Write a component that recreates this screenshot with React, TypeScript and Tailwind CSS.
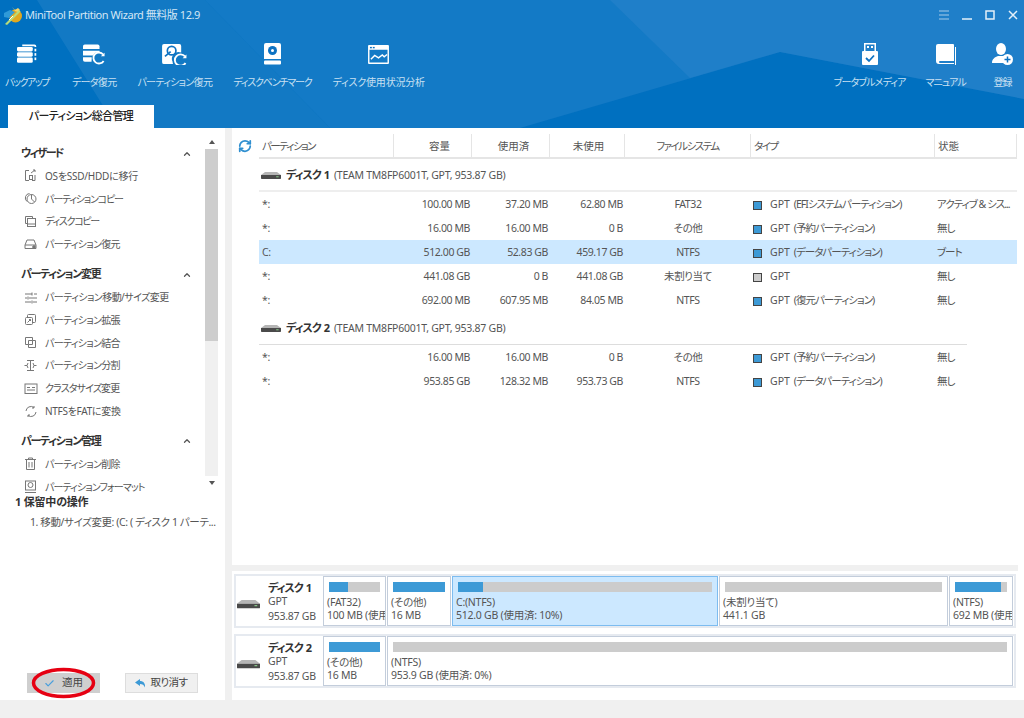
import React from "react";
import { RefreshCw, Check, ChevronUp } from "lucide-react";

const cols = "grid grid-cols-[135px_78px_78px_75px_126px_184px_82px]";

const tools = [
  { label: "バックアップ", icon: "backup", track: "tracking-[-1.5px]", cls: "w-[48px]" },
  { label: "データ復元", icon: "data", track: "tracking-[-0.7px]", cls: "" },
  { label: "パーティション復元", icon: "part", track: "tracking-[-0.7px]", cls: "" },
  { label: "ディスクベンチマーク", icon: "bench", track: "tracking-[-1.2px]", cls: "" },
  { label: "ディスク使用状況分析", icon: "usage", track: "tracking-[-0.2px]", cls: "" },
];

const ToolIcon = ({ name }: { name: string }) => {
  if (name === "backup")
    return (
      <svg width="21" height="20" viewBox="0 0 24 22" fill="white">
        <path d="M6 0h14a2 2 0 0 1 2 2v1h-2V2H6z" />
        <rect x="0" y="3" width="18" height="5" rx="1.5" />
        <rect x="0" y="9" width="18" height="5" rx="1.5" />
        <rect x="0" y="15" width="18" height="6" rx="1.5" />
        <rect x="20" y="5" width="2" height="3" />
        <rect x="20" y="10" width="2" height="3" />
        <rect x="20" y="15" width="2" height="3" />
      </svg>
    );
  if (name === "data")
    return (
      <svg width="22" height="21" viewBox="0 0 24 22" fill="white">
        <path d="M2 0h14a2 2 0 0 1 2 2v3H0V2a2 2 0 0 1 2-2z" />
        <path d="M0 7h18v2a6 6 0 0 0-7 3H0z" />
        <path d="M0 14h9.500v1l-.2 4H2a2 2 0 0 1-2-2z" />
        <path d="M22 11a6 6 0 1 0 .5 7" fill="none" stroke="white" strokeWidth="2" />
        <path d="M19.500 13h4v-4z" />
      </svg>
    );
  if (name === "part")
    return (
      <svg width="25" height="21" viewBox="0 0 26 22" fill="white">
        <path d="M2 0h16a2 2 0 0 1 2 2v7a7 7 0 0 0-9 9.500 7 7 0 0 0 .5 2.500H2a2 2 0 0 1-2-2V2a2 2 0 0 1 2-2z" />
        <circle cx="10" cy="7" r="4.500" fill="none" stroke="#0d72c2" strokeWidth="1.800" />
        <path d="M3 13l6-5" stroke="#0d72c2" strokeWidth="1.800" />
        <path d="M24 13a6 6 0 1 0 .5 7" fill="none" stroke="white" strokeWidth="2" />
        <path d="M21.500 15h4v-4z" />
      </svg>
    );
  if (name === "bench")
    return (
      <svg width="17" height="22" viewBox="0 0 17 22" fill="white">
        <path d="M2 0h13a2 2 0 0 1 2 2v14H0V2a2 2 0 0 1 2-2z" />
        <circle cx="8.500" cy="7.500" r="4.500" fill="#0d72c2" />
        <circle cx="8.500" cy="7.500" r="1.500" />
        <rect x="0" y="17.500" width="17" height="4" rx="1" />
      </svg>
    );
  return (
    <svg width="21" height="19" viewBox="0 0 22 20" fill="white">
      <path fillRule="evenodd" d="M1 0h20a1 1 0 0 1 1 1v18a1 1 0 0 1-1 1H1a1 1 0 0 1-1-1V1a1 1 0 0 1 1-1zM1.500 5v13.500h19V5z" />
      <rect x="2" y="2" width="2" height="1.500" fill="#0d72c2" />
      <rect x="5" y="2" width="2" height="1.500" fill="#0d72c2" />
      <path d="M3 15l4-4 4 2.500 4-3 2 2 3-2.500" fill="none" stroke="white" strokeWidth="1.500" />
    </svg>
  );
};

const RightTool = ({ label, children, cls }: { label: string; children: React.ReactNode; cls: string }) => (
  <div className={`flex flex-col items-center ${cls}`}>
    <div className="h-[24px] flex items-center justify-center">{children}</div>
    <div className="mt-[9px] text-[10px] leading-[14px] text-[#c9e0f2] whitespace-nowrap tracking-[-0.9px]">{label}</div>
  </div>
);

const sideGroups = [
  {
    title: "ウィザード",
    mt: "mt-0",
    track: "tracking-[-1.8px]",
    items: [
      ["os", "OSをSSD/HDDに移行", "tracking-[-0.25px]"],
      ["copyPart", "パーティションコピー", "tracking-[-1.2px]"],
      ["copyDisk", "ディスクコピー", "tracking-[-1.3px]"],
      ["restore", "パーティション復元", "tracking-[-0.7px]"],
    ],
  },
  {
    title: "パーティション変更",
    mt: "mt-[7px]",
    track: "tracking-[-1.3px]",
    items: [
      ["sliders", "パーティション移動/サイズ変更", "tracking-[-0.55px]"],
      ["extend", "パーティション拡張", "tracking-[-0.7px]"],
      ["merge", "パーティション結合", "tracking-[-0.7px]"],
      ["split", "パーティション分割", "tracking-[-0.7px]"],
      ["cluster", "クラスタサイズ変更", "tracking-[-0.9px]"],
      ["convert", "NTFSをFATに変換", "tracking-[-0.3px]"],
    ],
  },
  {
    title: "パーティション管理",
    mt: "mt-[7px]",
    track: "tracking-[-1.3px]",
    items: [
      ["trash", "パーティション削除", "tracking-[-0.7px]"],
      ["format", "パーティションフォーマット", "tracking-[-0.9px]"],
    ],
  },
];

const SideIcon = ({ name }: { name: string }) => {
  const shapes: Record<string, React.ReactNode> = {
    os: (
      <>
        <path d="M5 1.500H1.500v10H5M8 11.500h3V6" />
        <rect x="5.500" y="6.500" width="3" height="4" />
        <path d="M7 4l4-3M9 1h2v2" />
      </>
    ),
    copyPart: (
      <>
        <path d="M3 9.500A4.500 4.500 0 0 1 5.500 1.500" />
        <circle cx="7.500" cy="7" r="4.500" />
        <path d="M7.500 2.500V7l3 3" />
      </>
    ),
    copyDisk: (
      <>
        <path d="M3.500 8.500h-2v-7h7v2" />
        <rect x="3.500" y="3.500" width="8" height="8" />
        <path d="M3.500 9h8" />
      </>
    ),
    restore: (
      <>
        <path d="M1 7l2-5h7l2 5v3.500H1z" />
        <path d="M1 7h11" />
        <circle cx="10" cy="9" r="1.300" fill="#777" />
      </>
    ),
    sliders: <path d="M1 3h7M10 3h3M1 7h2M5 7h8M1 11h6M9 11h4M8 1.500v3M4 5.500v3M8 9.500v3" />,
    extend: (
      <>
        <rect x="3.500" y="1.500" width="8" height="8" rx="1" />
        <rect x="1.500" y="4.500" width="7" height="7" rx="1" fill="white" />
        <path d="M3.500 9.500l3-3M5 6.500h1.500V8" />
      </>
    ),
    merge: <path d="M1.500 1.500h7v3h3v7h-7v-3h-3zM4.500 4.500h4v4h-4z" />,
    split: <path d="M6.500 1v11M3 1.500h7M3 11.500h7M3 6.500H.5M10 6.500h2.500M4 4l-1 2.500L4 9M9 4l1 2.500L9 9" />,
    cluster: (
      <>
        <rect x="1" y="2" width="12" height="9.500" />
        <path d="M3 5.500h3M8 5.500h3M3 8h8" />
      </>
    ),
    convert: <path d="M2 6a5 5 0 0 1 8-3.500M12 7a5 5 0 0 1-8 3.500M10 1v2h-2M4 12v-2h2" />,
    trash: (
      <>
        <path d="M1 2.500h11M4.500 2.500V1h4v1.500M2.500 3v9.500h8V3" />
        <path d="M5 5v5.500M8 5v5.500" />
      </>
    ),
    format: (
      <>
        <rect x="1.500" y="1" width="10" height="9" />
        <circle cx="6.500" cy="5" r="2.500" />
        <path d="M1 12.500h11" />
      </>
    ),
  };
  return (
    <svg width="14" height="14" viewBox="0 0 14 14" fill="none" stroke="#777" strokeWidth="1">
      {shapes[name]}
    </svg>
  );
};

type Row = { name: string; cap: string; used: string; free: string; fs: string; type: string; state: string; selected?: boolean; gray?: boolean };

const disk1: Row[] = [
  { name: "*:", cap: "100.00 MB", used: "37.20 MB", free: "62.80 MB", fs: "FAT32", type: "(EFIシステムパーティション)", state: "アクティブ & シス..." },
  { name: "*:", cap: "16.00 MB", used: "16.00 MB", free: "0 B", fs: "その他", type: "(予約パーティション)", state: "無し" },
  { name: "C:", cap: "512.00 GB", used: "52.83 GB", free: "459.17 GB", fs: "NTFS", type: "(データパーティション)", state: "ブート", selected: true },
  { name: "*:", cap: "441.08 GB", used: "0 B", free: "441.08 GB", fs: "未割り当て", type: "", state: "無し", gray: true },
  { name: "*:", cap: "692.00 MB", used: "607.95 MB", free: "84.05 MB", fs: "NTFS", type: "(復元パーティション)", state: "無し" },
];

const disk2: Row[] = [
  { name: "*:", cap: "16.00 MB", used: "16.00 MB", free: "0 B", fs: "その他", type: "(予約パーティション)", state: "無し" },
  { name: "*:", cap: "953.85 GB", used: "128.32 MB", free: "953.73 GB", fs: "NTFS", type: "(データパーティション)", state: "無し" },
];

const DiskIcon = ({ w = 25 }: { w?: number }) => (
  <svg width={w} height={w * 0.45} viewBox="0 0 25 11">
    <path d="M0 5l5-4h15l5 4z" fill="#b5b5b5" />
    <path d="M0 5h25v4a1 1 0 0 1-1 1H1a1 1 0 0 1-1-1z" fill="#4a4a4a" />
    <rect x="19" y="6.500" width="3" height="1.200" fill="#8fd08f" />
  </svg>
);

const TableRow = ({ r }: { r: Row }) => (
  <div className={`${cols} h-6 items-center text-[10.500px] text-[#555] tracking-[-0.4px] ${r.selected ? "bg-[#cce8ff]" : ""}`}>
    <div className="pl-[3px] pt-[2px]">{r.name}</div>
    <div className="text-right pr-[2px] pt-[2px]">{r.cap}</div>
    <div className="text-right pr-[2px] pt-[2px]">{r.used}</div>
    <div className="text-right pr-[2px] pt-[2px]">{r.free}</div>
    <div className="text-center pt-[2px]">{r.fs}</div>
    <div className="flex items-center pl-[2px] pt-[2px] whitespace-nowrap">
      <span className={`w-[9px] h-[9px] border border-[#444] mr-[8px] ${r.gray ? "bg-[#ccc]" : "bg-[#3d9ad6]"}`} />
      <span className="mr-[4px] tracking-normal">GPT</span>
      <span className="tracking-[-1px]">{r.type}</span>
    </div>
    <div className="pl-[2px] pt-[2px] whitespace-nowrap overflow-hidden tracking-[-1px]">{r.state}</div>
  </div>
);

const DiskHead = ({ n, thick, short }: { n: number; thick?: boolean; short?: boolean }) => (
  <div className={`flex items-center h-[33px] ${short ? "w-[708px] border-b border-[#dddddd] pt-[1px]" : "border-b-2 border-[#eeeeee] pt-[2px]"}`}>
    <span className="ml-[2px] mr-[5px] flex">
      <DiskIcon w={20} />
    </span>
    <span className="text-[11px] font-bold text-[#333] tracking-[-1px]">ディスク</span>
    <span className="ml-[3px] text-[11px] font-bold text-[#333]">{n}</span>
    <span className="ml-[4px] text-[10.500px] text-[#555] tracking-[-0.25px]">(TEAM TM8FP6001T, GPT, 953.87 GB)</span>
  </div>
);

type Seg = { w: string; line1: string; line2: string; fill: string; selected?: boolean };

const map1: Seg[] = [
  { w: "w-[63px]", line1: "(FAT32)", line2: "100 MB (使用", fill: "w-[37%]" },
  { w: "w-[64px]", line1: "(その他)", line2: "16 MB", fill: "w-full" },
  { w: "w-[266px]", line1: "C:(NTFS)", line2: "512.0 GB (使用済: 10%)", fill: "w-[10%]", selected: true },
  { w: "w-[229px]", line1: "(未割り当て)", line2: "441.1 GB", fill: "w-0" },
  { w: "w-[64px]", line1: "(NTFS)", line2: "692 MB (使用", fill: "w-[88%]" },
];

const map2: Seg[] = [
  { w: "w-[63px]", line1: "(その他)", line2: "16 MB", fill: "w-full" },
  { w: "w-[626px]", line1: "(NTFS)", line2: "953.9 GB (使用済: 0%)", fill: "w-0" },
];

const MapDisk = ({ n, segs }: { n: number; segs: Seg[] }) => (
  <div className="h-[54px] border-2 border-[#e6eaf0] flex items-center">
    <div className="w-[87px] shrink-0 flex items-end h-full">
      <div className="w-[30px] pl-[1px] pb-[17px]">
        <DiskIcon w={23} />
      </div>
      <div className="pl-[2px] pb-[3px] text-[10.500px] leading-[14.500px] text-[#555] tracking-[-0.25px]">
        <div className="text-[11px] leading-[13px] font-bold text-[#333] flex">
          <span className="tracking-[-1px]">ディスク</span>
          <span className="ml-[3px]">{n}</span>
        </div>
        <div>GPT</div>
        <div className="whitespace-nowrap">953.87 GB</div>
      </div>
    </div>
    <div className="flex h-[50px] gap-[1px]">
      {segs.map((s) => (
        <div
          key={s.line1 + s.line2}
          className={`${s.w} h-full border px-[5px] pt-[5px] overflow-hidden ${s.selected ? "bg-[#cce8ff] border-[#7dbcf0]" : "border-[#c3cddb]"}`}
        >
          <div className="h-[10px] bg-[#cccccc]">
            <div className={`h-full bg-[#3d9ad6] ${s.fill}`} />
          </div>
          <div className="mt-[4px] -ml-[2px] text-[10.500px] leading-[13px] text-[#555] whitespace-nowrap tracking-[-0.25px]">
            <div>{s.line1}</div>
            <div>{s.line2}</div>
          </div>
        </div>
      ))}
    </div>
  </div>
);

export default function App() {
  return (
    <div className="w-[1024px] h-[718px] overflow-hidden flex flex-col bg-white font-['Noto_Sans','Noto_Sans_CJK_JP',sans-serif] [font-feature-settings:'palt']">
      {/* header */}
      <div className="relative h-[128px] shrink-0 bg-[#0070c0] overflow-hidden">
        <svg className="absolute inset-0" width="1024" height="128" viewBox="0 0 1024 128">
          <polygon points="37,0 205,0 330,128 117,128" fill="#3f92d0" opacity="0.28" />
          <polygon points="205,0 1024,0 1024,99 780,52 520,128 330,128" fill="#2584cc" opacity="0.5" />
          <polygon points="610,0 1024,0 1024,99 780,52 690,78" fill="#2f86cc" opacity="0.45" />
        </svg>
        <div className="relative h-full flex flex-col">
          <div className="h-[30px] flex items-center pl-[4px] pr-[6px]">
            <svg width="19" height="19" viewBox="0 0 19 19">
              <circle cx="11.500" cy="10" r="6.500" fill="#e0a820" />
              <path d="M0 7l6-3 5 2-6 6-5-1z" fill="#2f9ad8" />
              <path d="M8 1l3 3 3-2 2 2-2 2-3-1z" fill="#f5d76a" />
              <path d="M1 18L15 4l1.500 1.500L3 19z" fill="#b8dc7a" />
              <path d="M5 14l4-4" stroke="#ffffff" strokeWidth="1" />
            </svg>
            <span className="ml-[2px] text-[11px] text-[#d3e6f5] whitespace-nowrap tracking-[-0.45px]">MiniTool Partition Wizard 無料版 12.9</span>
            <div className="ml-auto flex items-center gap-[13px]">
              <svg width="10" height="10" viewBox="0 0 10 10" stroke="#a8cce8" strokeWidth="1">
                <path d="M0 1h10M0 5h10M0 9h10" />
              </svg>
              <svg width="10" height="10" viewBox="0 0 10 10" stroke="#e4f0f9" strokeWidth="1.500">
                <path d="M0 9h10" />
              </svg>
              <svg width="10" height="10" viewBox="0 0 10 10" fill="none" stroke="#e4f0f9" strokeWidth="1.500">
                <rect x="1" y="1" width="8" height="8" />
              </svg>
              <svg width="10" height="10" viewBox="0 0 10 10" stroke="#e4f0f9" strokeWidth="1.500">
                <path d="M1 1l8 8M9 1l-8 8" />
              </svg>
            </div>
          </div>
          <div className="flex pl-[3px] pr-[11px] pt-[12px]">
            <div className="flex gap-[21px]">
              {tools.map((t) => (
                <div key={t.label} className={`flex flex-col items-center ${t.cls}`}>
                  <div className="h-[24px] flex items-center justify-center">
                    <ToolIcon name={t.icon} />
                  </div>
                  <div className={`mt-[9px] text-[10px] leading-[14px] text-[#c9e0f2] whitespace-nowrap ${t.track}`}>{t.label}</div>
                </div>
              ))}
            </div>
            <div className="ml-auto flex">
              <RightTool label="ブータブルメディア" cls="">
                <svg width="16" height="22" viewBox="0 0 16 22" fill="white">
                  <path fillRule="evenodd" d="M2 0h12v8h-1.500V1.500h-9V8H2z" />
                  <rect x="5" y="3" width="2" height="2" />
                  <rect x="9" y="3" width="2" height="2" />
                  <rect x="0" y="8" width="16" height="14" rx="1" />
                  <path d="M4 15l3 3 5-5.500" fill="none" stroke="#0d72c2" strokeWidth="1.800" />
                </svg>
              </RightTool>
              <RightTool label="マニュアル" cls="ml-[20px]">
                <svg width="20" height="21" viewBox="0 0 20 21" fill="white">
                  <path d="M2 0h15a1 1 0 0 1 1 1v16H3.500a1.500 1.500 0 0 0 0 2H18v1H3a3 3 0 0 1-3-3V2a2 2 0 0 1 2-2z" />
                  <rect x="19" y="3" width="1" height="18" />
                </svg>
              </RightTool>
              <RightTool label="登録" cls="ml-[26px]">
                <svg width="21" height="22" viewBox="0 0 21 22" fill="white">
                  <ellipse cx="9" cy="6" rx="5" ry="6" />
                  <path d="M0 20c0-4 3-6 6-7h6l1 1a6 6 0 0 0-1 6z" />
                  <circle cx="15.500" cy="16.500" r="5.500" />
                  <path d="M15.500 13.500v6M12.500 16.500h6" stroke="#0d72c2" strokeWidth="1.500" />
                </svg>
              </RightTool>
            </div>
          </div>
          <div className="mt-auto pl-[8px] flex">
            <div className="w-[146px] h-[23px] bg-white flex items-center justify-center text-[11px] font-medium text-[#222] tracking-[-0.6px]">
              パーティション総合管理
            </div>
          </div>
        </div>
      </div>

      {/* body */}
      <div className="flex-1 flex min-h-0">
        {/* sidebar */}
        <div className="w-[225px] shrink-0 flex flex-col">
          <div className="h-[365px] shrink-0 flex overflow-hidden">
            <div className="w-[205px] shrink-0 pl-[21px] pt-[14px]">
              {sideGroups.map((g) => (
                <div key={g.title} className={g.mt}>
                  <div className={`h-[23px] flex items-center justify-between pr-[13px] text-[11px] font-bold text-[#333] ${g.track}`}>
                    {g.title}
                    <ChevronUp size={10} strokeWidth={3} className="text-[#555]" />
                  </div>
                  {g.items.map(([icon, label, track]) => (
                    <div key={label} className={`h-[22.800px] flex items-center pl-[3px] text-[10px] text-[#555] whitespace-nowrap ${track}`}>
                      <span className="w-[21px] flex shrink-0">
                        <SideIcon name={icon} />
                      </span>
                      {label}
                    </div>
                  ))}
                </div>
              ))}
            </div>
            <div className="w-[13px] h-[362px] flex flex-col items-center">
              <div className="h-[21px] flex items-center pt-[6px]">
                <svg width="6" height="4" viewBox="0 0 6 4" fill="#555">
                  <path d="M3 0l3 4H0z" />
                </svg>
              </div>
              <div className="w-full h-[327px] bg-[#f0f0f0]">
                <div className="h-[192px] bg-[#cdcdcd]" />
              </div>
              <div className="flex-1 flex items-center">
                <svg width="6" height="4" viewBox="0 0 6 4" fill="#555">
                  <path d="M3 4l3-4H0z" />
                </svg>
              </div>
            </div>
          </div>
          <div className="pl-[15px] pt-[1px] text-[11px] font-bold text-[#333] h-[19px] tracking-[-0.2px]">1 保留中の操作</div>
          <div className="pl-[30px] pt-[3px] text-[10.500px] text-[#555] whitespace-nowrap tracking-[-0.4px]">1. 移動/サイズ変更: (C: ( ディスク 1 パーテ...</div>
          <div className="mt-auto mb-[7px] flex gap-[25px] pl-[27px]">
            <div className="relative w-[73px] h-[20px] bg-[#cfcfcf] flex items-center justify-center text-[10.500px] text-[#444]">
              <Check size={11} strokeWidth={2.5} className="text-[#4a9fdc] mr-[7px]" />
              適用
              <svg className="absolute left-[3px] -top-[6px]" width="67" height="32" viewBox="0 0 67 32" fill="none">
                <ellipse cx="33.500" cy="16" rx="30" ry="13.500" stroke="#e60012" strokeWidth="3.500" />
              </svg>
            </div>
            <div className="w-[73px] h-[20px] bg-[#f0f0f0] border border-[#ddd] flex items-center justify-center text-[10.500px] text-[#444] tracking-[-0.5px]">
              <svg width="11" height="9" viewBox="0 0 11 9" fill="#3d9ad6" className="mr-[4px]">
                <path d="M5 0L0 3.500 5 7V5c2.500 0 4 1 5 3.500C10.500 4 8 2 5 2z" />
              </svg>
              取り消す
            </div>
          </div>
        </div>
        <div className="w-[7px] shrink-0 bg-[#f0f0f0]" />

        {/* main */}
        <div className="w-[786px] shrink-0 flex flex-col">
          <div className="flex-1 flex min-h-0">
            <div className="w-[27px] shrink-0 pt-[11px] pl-[6px]">
              <RefreshCw size={14} strokeWidth={3} className="text-[#2f8fd0]" />
            </div>
            <div className="w-[758px] pt-[6px]">
              <div className={`${cols} h-[25px] border-b-2 border-[#e5e5e5] text-[10.500px] text-[#555]`}>
                <div className="flex items-center pl-[3px] pt-[2px] border-r border-[#e5e5e5] tracking-[-1.6px]">パーティション</div>
                <div className="flex items-center justify-center pl-[14px] pt-[2px] border-r border-[#e5e5e5]">容量</div>
                <div className="flex items-center justify-center pl-[6px] pt-[2px] border-r border-[#e5e5e5]">使用済</div>
                <div className="flex items-center justify-center pl-[3px] pt-[2px] border-r border-[#e5e5e5]">未使用</div>
                <div className="flex items-center justify-center pt-[2px] border-r border-[#e5e5e5] tracking-[-1.5px]">ファイルシステム</div>
                <div className="flex items-center pl-[3px] pt-[2px] border-r border-[#e5e5e5] tracking-[-1.5px]">タイプ</div>
                <div className="flex items-center pl-[3px] pt-[2px] border-r border-[#e5e5e5]">状態</div>
              </div>
              <DiskHead n={1} thick />
              {disk1.map((r) => (
                <TableRow key={r.cap + r.used} r={r} />
              ))}
              <DiskHead n={2} short />
              {disk2.map((r) => (
                <TableRow key={r.cap + r.used} r={r} />
              ))}
            </div>
          </div>
          <div className="h-[6px] bg-[#f0f0f0]" />
          <div className="pl-[2px] pr-[2px] pt-[3px] pb-[12px] flex flex-col gap-[6px]">
            <MapDisk n={1} segs={map1} />
            <MapDisk n={2} segs={map2} />
          </div>
        </div>
        <div className="w-[6px] shrink-0" />
      </div>

      <div className="h-[18px] shrink-0 bg-[#f0f0f0]" />
    </div>
  );
}
